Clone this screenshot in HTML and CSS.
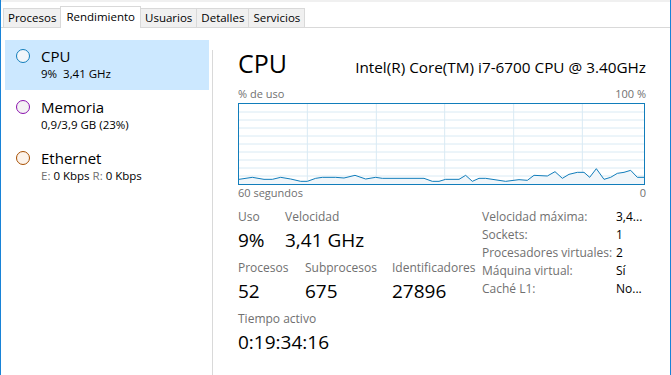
FILE: index.html
```html
<!DOCTYPE html>
<html lang="es">
<head>
    <meta charset="UTF-8">
    <meta name="viewport" content="width=device-width, initial-scale=1.0">
    <title>Administrador de tareas</title>
    <link rel="stylesheet" href="styles.css">
</head>
<body>
    <div class="window">
        <div class="top-strip"></div>

        <!-- tab bar -->
        <div class="tabs">
            <div class="tab">Procesos</div>
            <div class="tab active">Rendimiento</div>
            <div class="tab">Usuarios</div>
            <div class="tab">Detalles</div>
            <div class="tab">Servicios</div>
        </div>

        <div class="main">
            <div class="sidebar">
                <div class="item selected">
                    <span class="dot dot-cpu"></span>
                    <div class="item-text">
                        <div class="item-title">CPU</div>
                        <div class="item-sub">9%&nbsp; 3,41 GHz</div>
                    </div>
                </div>
                <div class="item">
                    <span class="dot dot-mem"></span>
                    <div class="item-text">
                        <div class="item-title">Memoria</div>
                        <div class="item-sub">0,9/3,9 GB (23%)</div>
                    </div>
                </div>
                <div class="item">
                    <span class="dot dot-eth"></span>
                    <div class="item-text">
                        <div class="item-title">Ethernet</div>
                        <div class="item-sub"><span class="muted">E:</span> 0 Kbps <span class="muted">R:</span> 0 Kbps</div>
                    </div>
                </div>
            </div>

            <div class="detail">
                <div class="detail-head">
                    <div class="detail-title">CPU</div>
                    <div class="detail-model">Intel(R) Core(TM) i7-6700 CPU @ 3.40GHz</div>
                </div>

                <div class="axis">
                    <span>% de uso</span>
                    <span>100 %</span>
                </div>

                <div class="graph">
                    <svg width="405" height="80" viewBox="60 9 1215 240" preserveAspectRatio="none">
                        <g class="grid">
                            <line x1="265" y1="9" x2="265" y2="249"/>
                            <line x1="472" y1="9" x2="472" y2="249"/>
                            <line x1="677" y1="9" x2="677" y2="249"/>
                            <line x1="884" y1="9" x2="884" y2="249"/>
                            <line x1="1090" y1="9" x2="1090" y2="249"/>
                            <line x1="60" y1="33" x2="1275" y2="33"/>
                            <line x1="60" y1="57" x2="1275" y2="57"/>
                            <line x1="60" y1="81" x2="1275" y2="81"/>
                            <line x1="60" y1="105" x2="1275" y2="105"/>
                            <line x1="60" y1="129" x2="1275" y2="129"/>
                            <line x1="60" y1="153" x2="1275" y2="153"/>
                            <line x1="60" y1="177" x2="1275" y2="177"/>
                            <line x1="60" y1="201" x2="1275" y2="201"/>
                            <line x1="60" y1="225" x2="1275" y2="225"/>
                        </g>
                        <polygon class="area" points="60,235 100,229 135,235 160,235 185,229 215,234 245,241 265,241 290,232 310,229 350,229 375,231 408,223 440,234 470,229 490,232 615,232 640,241 660,241 680,235 720,235 740,223 760,241 780,232 800,232 860,241 900,236 925,238 945,223 985,225 1008,212 1030,232 1050,220 1075,214 1095,214 1112,229 1132,203 1155,235 1175,229 1195,217 1215,214 1235,208 1255,229 1275,229 1275,249 60,249"/>
                        <polyline class="line" points="60,235 100,229 135,235 160,235 185,229 215,234 245,241 265,241 290,232 310,229 350,229 375,231 408,223 440,234 470,229 490,232 615,232 640,241 660,241 680,235 720,235 740,223 760,241 780,232 800,232 860,241 900,236 925,238 945,223 985,225 1008,212 1030,232 1050,220 1075,214 1095,214 1112,229 1132,203 1155,235 1175,229 1195,217 1215,214 1235,208 1255,229 1275,229"/>
                    </svg>
                </div>

                <div class="axis">
                    <span>60 segundos</span>
                    <span>0</span>
                </div>

                <div class="stats">
                    <div class="stats-left">
                        <div class="stat-row">
                            <div class="stat stat-uso">
                                <div class="stat-label">Uso</div>
                                <div class="stat-value">9%</div>
                            </div>
                            <div class="stat">
                                <div class="stat-label">Velocidad</div>
                                <div class="stat-value">3,41 GHz</div>
                            </div>
                        </div>
                        <div class="stat-row">
                            <div class="stat stat-proc">
                                <div class="stat-label">Procesos</div>
                                <div class="stat-value">52</div>
                            </div>
                            <div class="stat stat-sub">
                                <div class="stat-label">Subprocesos</div>
                                <div class="stat-value">675</div>
                            </div>
                            <div class="stat">
                                <div class="stat-label">Identificadores</div>
                                <div class="stat-value">27896</div>
                            </div>
                        </div>
                        <div class="stat-row">
                            <div class="stat">
                                <div class="stat-label">Tiempo activo</div>
                                <div class="stat-value">0:19:34:16</div>
                            </div>
                        </div>
                    </div>

                    <div class="specs">
                        <div class="spec-label">Velocidad máxima:</div><div class="spec-value">3,4...</div>
                        <div class="spec-label">Sockets:</div><div class="spec-value">1</div>
                        <div class="spec-label">Procesadores virtuales:</div><div class="spec-value">2</div>
                        <div class="spec-label">Máquina virtual:</div><div class="spec-value">Sí</div>
                        <div class="spec-label">Caché L1:</div><div class="spec-value">No...</div>
                    </div>
                </div>
            </div>
        </div>
    </div>
</body>
</html>
```

FILE: styles.css
```css
body {
    margin: 0;
    font-family: 'Open Sans', 'Noto Sans', sans-serif;
    color: #000000;
    background: #ffffff;
}

.window {
    width: 671px;
    height: 375px;
    box-sizing: border-box;
    border-left: 1px solid #1883d7;
    border-right: 1px solid #1883d7;
    overflow: hidden;
    display: flex;
    flex-direction: column;
}

.top-strip {
    height: 2px;
    background-color: #f0f0f0;
}

/* tabs */
.tabs {
    display: flex;
    align-items: flex-end;
    height: 25px;
    padding-left: 2px;
    border-bottom: 1px solid #d9d9d9;
}

.tab {
    height: 18px;
    padding: 0 4px;
    font-size: 11.5px;
    line-height: 18px;
    background-color: #f0f0f0;
    border: 1px solid #d9d9d9;
    border-bottom: none;
    margin-right: -1px;
}

.tab.active {
    height: 21px;
    line-height: 19px;
    background-color: #ffffff;
    margin-bottom: -1px;
    padding: 0 5px;
    position: relative;
}

/* main area */
.main {
    flex: 1;
    display: flex;
}

.sidebar {
    width: 204px;
    padding: 12px 0 0 4px;
    display: flex;
    flex-direction: column;
    gap: 1px;
}

.item {
    height: 50px;
    box-sizing: border-box;
    padding: 7px 0 0 11px;
    display: flex;
    gap: 11px;
}

.item.selected {
    background-color: #cce8ff;
}

.dot {
    width: 12px;
    height: 12px;
    border-radius: 50%;
    border: 1px solid;
    margin-top: 2px;
    flex-shrink: 0;
}

.dot-cpu {
    border-color: #117dbb;
    background-color: #f1f6fa;
}

.dot-mem {
    border-color: #8b12ae;
    background-color: #f4f2f4;
}

.dot-eth {
    border-color: #a74f01;
    background-color: #fcf3eb;
}

.item-title {
    font-size: 15px;
    line-height: 19px;
}

.item-sub {
    font-size: 11.5px;
    line-height: 16px;
}

.muted {
    color: #707070;
}

/* detail */
.detail {
    flex: 1;
    margin-top: 22px;
    border-left: 1px solid #d9d9d9;
    padding: 0 24px 0 25px;
    margin-left: 3px;
}

.detail-head {
    display: flex;
    justify-content: space-between;
    align-items: baseline;
    margin-top: -3px;
    height: 39px;
}

.detail-title {
    font-size: 25px;
    line-height: 32px;
}

.detail-model {
    font-size: 15.3px;
}

.axis {
    display: flex;
    justify-content: space-between;
    font-size: 11px;
    line-height: 16px;
    color: #707070;
}

.graph {
    border: 1px solid #117dbb;
    width: 405px;
    height: 80px;
    margin-top: 1px;
}

.graph svg {
    display: block;
}

.grid line {
    stroke: #d9eaf4;
    stroke-width: 1;
    vector-effect: non-scaling-stroke;
}

.area {
    fill: #f1f6fa;
}

.line {
    fill: none;
    stroke: #117dbb;
    stroke-width: 1;
    vector-effect: non-scaling-stroke;
}

.stats {
    display: flex;
    margin-top: 8px;
}

.stats-left {
    width: 244px;
}

.stat-row {
    display: flex;
    height: 51px;
}

.stat-uso {
    width: 47px;
}

.stat-proc {
    width: 67px;
}

.stat-sub {
    width: 87px;
}

.stat-label {
    font-size: 12px;
    line-height: 16px;
    color: #707070;
}

.stat-value {
    font-size: 19px;
    line-height: 30px;
}

.specs {
    display: grid;
    grid-template-columns: 134px 30px;
    grid-auto-rows: 18px;
    font-size: 12px;
    line-height: 18px;
    margin-top: -1px;
}

.spec-label {
    color: #707070;
}

.spec-value {
    white-space: nowrap;
}
```
